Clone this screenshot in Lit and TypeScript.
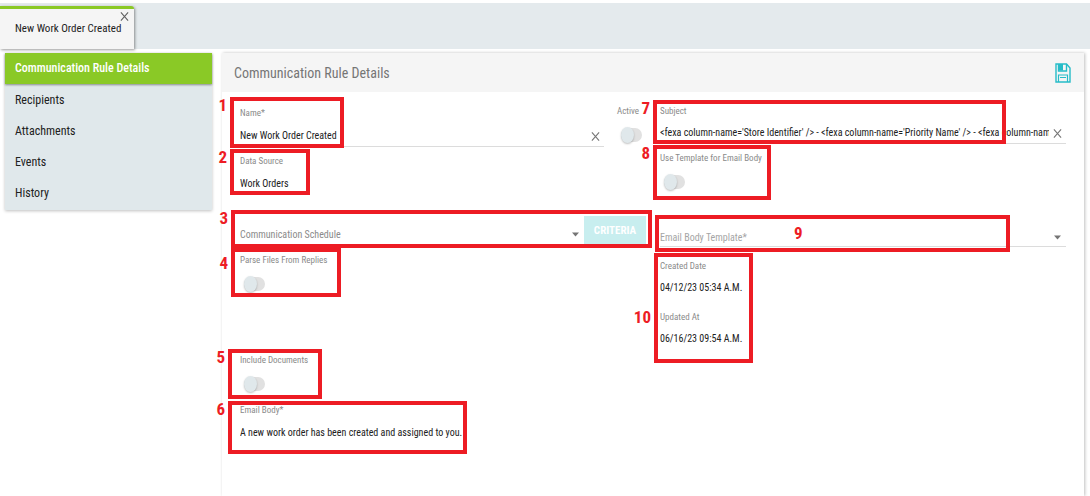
import { LitElement, html, css } from "lit";
import { customElement, property } from "lit/decorators.js";

@customElement("toggle-field")
class ToggleField extends LitElement {
  @property() label = "";

  static styles = css`
    :host {
      display: block;
      min-width: 29px;
    }
    .wrap {
      display: flex;
      flex-direction: column;
      align-items: flex-start;
      gap: 6px;
      color: #8a8a8a;
      font-size: 9px;
      line-height: 16px;
      white-space: nowrap;
    }
    .box {
      display: flex;
      align-items: center;
      height: 20px;
      padding-left: 4px;
    }
    .switch {
      appearance: none;
      display: flex;
      align-items: center;
      margin: 0;
      width: 21px;
      height: 14px;
      border-radius: 7px;
      background: #e1e1e1;
    }
    .switch::before {
      content: "";
      width: 13px;
      height: 16px;
      flex: none;
      border-radius: 50%;
      background: #e0e8eb;
      box-shadow: 0 1px 2px rgba(0, 0, 0, 0.25);
    }
    .switch:checked {
      justify-content: flex-end;
      background: #a5e3e3;
    }
  `;

  render() {
    return html`<label class="wrap">
      <span>${this.label}</span>
      <span class="box"><input class="switch" type="checkbox" role="switch" /></span>
    </label>`;
  }
}

@customElement("app-root")
class AppRoot extends LitElement {
  static styles = css`
    :host {
      display: flex;
      flex-direction: column;
      min-height: 100vh;
      box-sizing: border-box;
      padding-top: 3px;
      background: #fff;
      color: #212121;
      font-family: "Roboto Condensed", Roboto, "Liberation Sans", sans-serif;
      font-size: 10px;
    }
    * {
      box-sizing: border-box;
    }
    button,
    input,
    select,
    textarea {
      font: inherit;
      color: inherit;
      border: 0;
      margin: 0;
      padding: 0;
      background: none;
      border-radius: 0;
      outline: none;
    }
    .tabs {
      display: flex;
      height: 46px;
      padding-top: 3px;
      background: #e4eaed;
    }
    .tab {
      display: flex;
      align-items: flex-start;
      width: 134px;
      padding: 3px 5px 0 15px;
      border-top: 3px solid #8ac926;
      border-top-right-radius: 3px;
      background: #f5f5f5;
      box-shadow: 1px 1px 3px rgba(0, 0, 0, 0.4);
      font-size: 11px;
    }
    .tab-name {
      flex: 1;
      min-width: 0;
      padding-top: 8px;
      line-height: 18px;
      white-space: nowrap;
    }
    .close {
      display: flex;
      flex: none;
      align-items: center;
      justify-content: center;
      width: 9px;
      height: 9px;
    }
    .main {
      display: flex;
      flex: 1;
      align-items: stretch;
      gap: 10px;
      padding: 4px 6px 0 5px;
    }
    .side {
      display: flex;
      flex-direction: column;
      flex: none;
      align-self: flex-start;
      width: 207px;
      padding-bottom: 1px;
      background: #e0e8eb;
      box-shadow: 0 1px 3px rgba(0, 0, 0, 0.25);
    }
    .link {
      padding-left: 10px;
      color: #212121;
      font-size: 12px;
      line-height: 31px;
      text-decoration: none;
    }
    .link.on {
      margin-bottom: 1px;
      background: #8ac926;
      box-shadow: 0 1px 2px rgba(0, 0, 0, 0.4);
      color: #fff;
      font-weight: 500;
    }
    .panel {
      flex: 1;
      min-width: 0;
      box-shadow: 1px 0 3px rgba(0, 0, 0, 0.25);
    }
    .head {
      display: flex;
      align-items: center;
      justify-content: space-between;
      height: 39px;
      padding: 0 13px 0 12px;
      background: #f5f5f5;
    }
    .title {
      margin: 0;
      color: #757575;
      font-size: 14px;
      font-weight: 400;
    }
    .save {
      display: flex;
    }
    .body {
      display: grid;
      grid-template-columns: 1fr 1fr;
      gap: 14px;
      padding: 0 18px;
    }
    .col {
      position: relative;
      display: flex;
      flex-direction: column;
      min-width: 0;
      padding-top: 11px;
    }
    .row {
      display: flex;
      gap: 13px;
    }
    .grow {
      flex: 1;
      min-width: 0;
      padding-top: 2px;
    }
    .field {
      display: flex;
      flex-direction: column;
      gap: 4px;
    }
    .left .field {
      gap: 5px;
    }
    .label {
      color: #8a8a8a;
      font-size: 9px;
      line-height: 16px;
    }
    .value {
      height: 20px;
      line-height: 20px;
    }
    .area {
      resize: none;
      overflow: hidden;
    }
    .line {
      display: flex;
      align-items: center;
      gap: 4px;
      padding-right: 4px;
      border-bottom: 1px solid #dcdcdc;
    }
    .line .value {
      flex: 1;
      min-width: 0;
    }
    .pick {
      display: flex;
      align-items: center;
      min-width: 0;
      padding-right: 5px;
      border-bottom: 1px solid #dcdcdc;
      color: #8a8a8a;
    }
    .pick.dim {
      color: #a5a5a5;
    }
    .pick select {
      flex: 1;
      min-width: 0;
      height: 18px;
      appearance: none;
      opacity: 1;
    }
    .sched {
      display: flex;
      align-items: stretch;
      height: 30px;
    }
    .sched .pick {
      flex: 1;
      padding-top: 7px;
    }
    .criteria {
      width: 62px;
      height: 28px;
      background: #c8eeef;
      color: #fff;
      font-size: 11px;
      font-weight: 700;
    }
    .g6 {
      margin-top: 6px;
    }
    .g8 {
      margin-top: 8px;
    }
    .g11 {
      margin-top: 11px;
    }
    .g22 {
      margin-top: 22px;
    }
    .g36 {
      margin-top: 36px;
    }
    .g58 {
      margin-top: 58px;
    }
    /* Numbered call-outs laid over the form */
    .mark {
      position: absolute;
      border: 4px solid #ed1c24;
      pointer-events: none;
    }
    .num {
      position: absolute;
      top: -4px;
      right: calc(100% + 7px);
      color: #ed1c24;
      font-size: 17px;
      font-weight: 700;
      line-height: 16px;
    }
    .m1 { left: -10px; top: 5px; width: 114px; height: 51px; }
    .m2 { left: -10px; top: 57px; width: 80px; height: 46px; }
    .m3 { left: -9px; top: 118px; right: -6px; height: 38px; }
    .m4 { left: -9px; top: 156px; width: 110px; height: 49px; }
    .m5 { left: -12px; top: 257px; width: 94px; height: 50px; }
    .m6 { left: -12px; top: 309px; width: 239px; height: 53px; }
    .m7 { left: -7px; top: 8px; right: 60px; height: 44px; }
    .m8 { left: -7px; top: 53px; width: 118px; height: 55px; }
    .m9 { left: -5px; top: 123px; right: 56px; height: 37px; }
    .m10 { left: -6px; top: 161px; width: 99px; height: 110px; }
    .m4 .num { top: 3px; }
    .m9 .num { top: 6px; right: auto; left: 135px; }
    .m10 .num { top: 52px; }
  `;

  private cross(size: number, color: string) {
    return html`<svg width=${size} height=${size} viewBox="0 0 10 10" aria-hidden="true">
      <path d="M1 0.5 9 9.5M9 0.5 1 9.5" fill="none" stroke=${color} stroke-width="1.2" />
    </svg>`;
  }

  private caret() {
    return html`<svg width="7" height="5" viewBox="0 0 7 5" aria-hidden="true">
      <path d="M0 0.5h7L3.5 4.5z" fill="#757575" />
    </svg>`;
  }

  private mark(n: number) {
    return html`<div class="mark m${n}"><span class="num">${n}</span></div>`;
  }

  render() {
    return html`
      <header class="tabs">
        <div class="tab">
          <span class="tab-name">New Work Order Created</span>
          <button class="close" aria-label="Close tab">${this.cross(9, "#616161")}</button>
        </div>
      </header>
      <div class="main">
        <nav class="side">
          <a class="link on" href="#details">Communication Rule Details</a>
          <a class="link" href="#recipients">Recipients</a>
          <a class="link" href="#attachments">Attachments</a>
          <a class="link" href="#events">Events</a>
          <a class="link" href="#history">History</a>
        </nav>
        <main class="panel">
          <div class="head">
            <h1 class="title">Communication Rule Details</h1>
            <button class="save" aria-label="Save">
              <svg width="16" height="20" viewBox="0 0 16 20" fill="none" stroke="#26bcc8" stroke-width="1.4">
                <path d="M1 1h10.500L15 5v14H1z" />
                <path d="M3.500 1v7h8V1" />
                <path d="M4 1h4v6.500H4z" fill="#26bcc8" stroke="none" />
                <path d="M3.500 19v-7h9v7M5 14.500h6" stroke-width="1.200" />
              </svg>
            </button>
          </div>
          <div class="body">
            <section class="col left">
              <div class="row">
                <div class="field grow">
                  <label class="label" for="name">Name*</label>
                  <div class="line">
                    <input class="value" id="name" type="text" value="New Work Order Created" />
                    <button class="close" aria-label="Clear name">${this.cross(9, "#757575")}</button>
                  </div>
                </div>
                <toggle-field label="Active"></toggle-field>
              </div>
              <div class="field g6">
                <span class="label">Data Source</span>
                <span class="value">Work Orders</span>
              </div>
              <div class="sched g22">
                <div class="pick">
                  <select aria-label="Communication Schedule">
                    <option>Communication Schedule</option>
                  </select>
                  ${this.caret()}
                </div>
                <button class="criteria">CRITERIA</button>
              </div>
              <toggle-field class="g6" label="Parse Files From Replies"></toggle-field>
              <toggle-field class="g58" label="Include Documents"></toggle-field>
              <div class="field g8">
                <label class="label" for="body">Email Body*</label>
                <textarea class="value area" id="body" rows="1">A new work order has been created and assigned to you.</textarea>
              </div>
              ${[1, 2, 3, 4, 5, 6].map((n) => this.mark(n))}
            </section>
            <section class="col">
              <div class="field">
                <label class="label" for="subject">Subject</label>
                <div class="line">
                  <input
                    class="value"
                    id="subject"
                    type="text"
                    value="<fexa column-name='Store Identifier' /> - <fexa column-name='Priority Name' /> - <fexa column-name='Facility' />"
                  />
                  <button class="close" aria-label="Clear subject">${this.cross(9, "#757575")}</button>
                </div>
              </div>
              <toggle-field class="g6" label="Use Template for Email Body"></toggle-field>
              <div class="pick dim g36">
                <select aria-label="Email Body Template" disabled>
                  <option>Email Body Template*</option>
                </select>
                ${this.caret()}
              </div>
              <div class="field g11">
                <span class="label">Created Date</span>
                <span class="value">04/12/23 05:34 A.M.</span>
              </div>
              <div class="field g11">
                <span class="label">Updated At</span>
                <span class="value">06/16/23 09:54 A.M.</span>
              </div>
              ${[7, 8, 9, 10].map((n) => this.mark(n))}
            </section>
          </div>
        </main>
      </div>
    `;
  }
}
